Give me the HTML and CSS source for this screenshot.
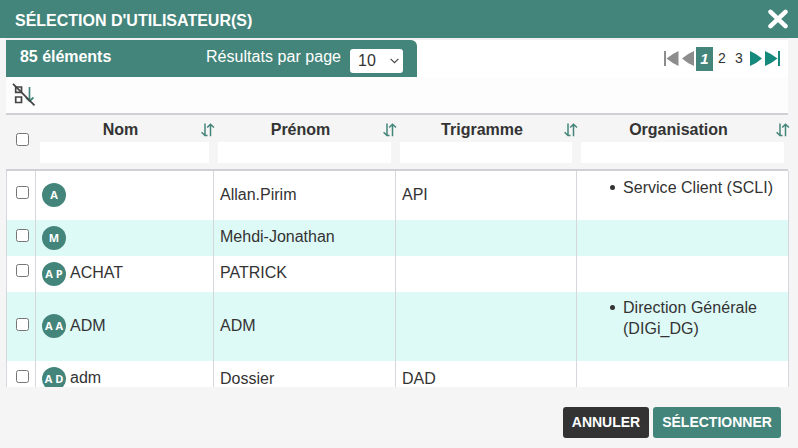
FILE: index.html
```html
<!DOCTYPE html>
<html lang="fr">
<head>
<meta charset="utf-8">
<title>Sélection d'utilisateur(s)</title>
<link rel="stylesheet" href="styles.css">
</head>
<body>
<svg class="defs" width="0" height="0">
  <symbol id="sort" viewBox="0 0 14 14"><path d="M4 .5v12M.6 9.200 4 12.600H6.500M9.500 13.200V1.200M6.200 4.500 9.500 1.200l3.500 3.300" fill="none" stroke="#43857a" stroke-width="1.5"/></symbol>
</svg>
<header class="title-bar">
  <h1>SÉLECTION D'UTILISATEUR(S)</h1>
  <svg class="close" width="20" height="20" viewBox="0 0 20 20"><path d="M2.500 2.800l15 14.400M17.500 2.800l-15 14.400" stroke="#fff" stroke-width="4.500" stroke-linecap="round"/></svg>
</header>
<main class="panel">
  <div class="top">
    <div class="tab">
      <b class="count">85 éléments</b>
      <span class="per-page">Résultats par page</span>
      <span class="select">10<svg width="9" height="6" viewBox="0 0 9 6"><path d="M.6.8l3.900 3.900L8.400.8" fill="none" stroke="#444" stroke-width="1.100"/></svg></span>
    </div>
    <nav class="pager">
      <svg width="15" height="15" viewBox="0 0 15 15" fill="#8d8d8d"><path d="M0 0h2v15H0zM14.500 0v15Q8 12 2.500 7.500 8 3 14.500 0z"/></svg>
      <svg class="prev" width="12" height="15" viewBox="0 0 12 15" fill="#8d8d8d"><path d="M12 0v15Q5 12 0 7.500 5 3 12 0z"/></svg>
      <span class="current">1</span>
      <span class="page">2</span>
      <span class="page three">3</span>
      <svg class="next" width="12" height="15" viewBox="0 0 12 15" fill="#15897b"><path d="M0 0v15Q7 12 12 7.500 7 3 0 0z"/></svg>
      <svg class="last" width="15" height="15" viewBox="0 0 15 15" fill="#15897b"><path d="M13 0h2v15h-2zM0 0v15Q7 12 12.500 7.500 7 3 0 0z"/></svg>
    </nav>
  </div>
  <div class="tools">
    <svg width="24" height="24" viewBox="0 0 24 24" fill="none"><path d="M17.500 4v14M13.800 14.500l3.700 3.500 4-3.500" stroke="#43857a" stroke-width="1.700"/><path d="M3.700 4h5.800v5.300h-5.800zM3.700 14h5.800v5.500h-5.800z" stroke="#444" stroke-width="1.700"/><path d="M1 .8l21.500 21.500" stroke="#444" stroke-width="1.800"/></svg>
  </div>
  <div class="row head">
    <div class="check"><i class="box"></i></div>
    <div class="col"><div class="label">Nom<svg class="sort"><use href="#sort"/></svg></div><div class="filter"></div></div>
    <div class="col"><div class="label">Prénom<svg class="sort"><use href="#sort"/></svg></div><div class="filter"></div></div>
    <div class="col"><div class="label">Trigramme<svg class="sort"><use href="#sort"/></svg></div><div class="filter"></div></div>
    <div class="col"><div class="label">Organisation<svg class="sort"><use href="#sort"/></svg></div><div class="filter"></div></div>
  </div>
  <div class="body">
    <div class="row r1"><div class="check"><i class="box"></i></div><div class="name"><span class="avatar">A</span></div><div>Allan.Pirim</div><div>API</div><div><ul><li>Service Client (SCLI)</li></ul></div></div>
    <div class="row r2"><div class="check"><i class="box"></i></div><div class="name"><span class="avatar">M</span></div><div>Mehdi-Jonathan</div><div></div><div></div></div>
    <div class="row r3"><div class="check"><i class="box"></i></div><div class="name"><span class="avatar">A P</span><span class="last-name">ACHAT</span></div><div>PATRICK</div><div></div><div></div></div>
    <div class="row r4"><div class="check"><i class="box"></i></div><div class="name"><span class="avatar">A A</span><span class="last-name">ADM</span></div><div>ADM</div><div></div><div><ul><li>Direction Générale (DIGi_DG)</li></ul></div></div>
    <div class="row r5"><div class="check"><i class="box"></i></div><div class="name"><span class="avatar">A D</span><span class="last-name">adm</span></div><div>Dossier</div><div>DAD</div><div></div></div>
  </div>
</main>
<footer class="actions">
  <button class="cancel">ANNULER</button>
  <button class="select-btn">SÉLECTIONNER</button>
</footer>
</body>
</html>
```
FILE: styles.css
```css
* { box-sizing: border-box; }
body {
  margin: 0;
  height: 448px;
  overflow: hidden;
  background: #f5f5f5;
  color: #333;
  font: 16px/21px "Liberation Sans", Arial, sans-serif;
}
svg { display: block; flex: none; }
.defs { position: absolute; }
.title-bar {
  height: 38px;
  background: #43857a;
  color: #fff;
  display: flex;
  align-items: center;
  justify-content: space-between;
  padding: 2px 10px 0 15px;
}
h1 { margin: 0; font-size: 16px; line-height: 21px; }
.close { margin-top: -3px; }
.panel { width: 783px; margin-left: 6px; padding-top: 2px; }
.top { display: flex; height: 37px; background: #fff; margin-right: 1px; box-shadow: 0 -2px #f0f0f0; }
.tab {
  width: 411px;
  background: #43857a;
  border-radius: 0 6px 0 0;
  color: #fff;
  display: flex;
  padding: 6px 14px 0 14px;
}
.count { width: 186px; letter-spacing: -0.03px; }
.per-page { width: 144px; white-space: nowrap; letter-spacing: 0.04px; }
.select {
  width: 53px;
  height: 24px;
  margin-top: 3px;
  padding: 0 4px 0 8px;
  border-radius: 3px;
  background: #fff;
  color: #333;
  line-height: 24px;
  display: flex;
  align-items: center;
  justify-content: space-between;
}
.pager {
  display: flex;
  align-items: center;
  margin-left: auto;
  padding-right: 8px;
  font-size: 14px;
}
.prev { margin: 0 2px 0 3px; }
.current {
  width: 17px;
  height: 24px;
  background: #43857a;
  color: #fff;
  font-weight: bold;
  font-style: italic;
  font-size: 15px;
  line-height: 24px;
  text-align: center;
}
.page { width: 8px; margin-left: 5px; }
.three { margin-left: 9px; }
.next { margin-left: 7px; }
.last { margin-left: 3px; }
.tools { height: 36px; background: #fdfdfd; padding: 6px; margin-right: 1px; }
.row { display: grid; grid-template-columns: 29px 178px 182px 181px 213px; }
.check { display: flex; justify-content: center; }
.box {
  width: 13px;
  height: 13px;
  border: 1px solid #767676;
  border-radius: 2.5px;
  background: #fff;
}
.head {
  height: 58px;
  border-top: 2px solid #cfcfd6;
  border-bottom: 2px solid #cfcfd6;
  margin-right: 1px;
  grid-template-columns: 29px 178px 182px 181px 212px;
}
.head .check { padding: 18px 0 0 3px; }
.col { padding: 4px 4px 0 5px; }
.label {
  display: flex;
  height: 23px;
  justify-content: center;
  font-weight: bold;
  position: relative;
  padding-right: 8px;
}
.sort { position: absolute; width: 14px; height: 14px; top: 4px; right: -6px; }
.filter { height: 21px; background: #fff; }
.body { height: 216px; overflow: hidden; }
.body .row { background: #fff; border-right: 1px solid #d6d6dd; }
.body .row > div { border-left: 1px solid #d6d6dd; padding-left: 6px; }
.body .row > .check { padding-left: 2px; }
.body .r2, .body .r4 { background: #defaf7; }
.r1 { height: 49px; line-height: 48px; }
.r2 { height: 36px; line-height: 34px; }
.r3 { height: 36px; line-height: 34px; }
.r4 { height: 69px; line-height: 68px; }
.r5 { height: 36px; line-height: 36px; }
.r1 .check { padding-top: 15px; }
.r2 .check { padding-top: 9px; }
.r3 .check { padding-top: 8px; }
.r4 .check { padding-top: 26px; }
.r5 .check { padding-top: 9px; }
.name { display: flex; align-items: center; gap: 4px; height: 100%; }
.last-name { line-height: 21px; padding-bottom: 2px; }
.r1 .name, .r2 .name, .r3 .name, .r4 .name, .r5 .name { padding-bottom: 1px; }
.avatar {
  width: 24px;
  height: 24px;
  border-radius: 50%;
  background: #43857a;
  color: #fff;
  font: bold 11px/24px "Open Sans", sans-serif;
  text-align: center;
  white-space: nowrap;
}
ul { margin: 0; padding: 6px 0 0 40px; line-height: 21px; list-style: none; }
.r4 ul { padding-top: 5px; }
li { position: relative; letter-spacing: 0.03px; }
li::before {
  content: "";
  position: absolute;
  left: -13px;
  top: 8px;
  width: 5px;
  height: 5px;
  border-radius: 50%;
  background: #333;
}
.actions { display: flex; justify-content: flex-end; gap: 4px; padding: 20px 17px 0 0; }
button {
  height: 31px;
  border: 0;
  border-radius: 3px;
  color: #fff;
  font: bold 14px "Liberation Sans", Arial, sans-serif;
  padding: 0 0 2px;
}
.cancel { width: 86px; background: #333; }
.select-btn { width: 128px; background: #43857a; }
```
